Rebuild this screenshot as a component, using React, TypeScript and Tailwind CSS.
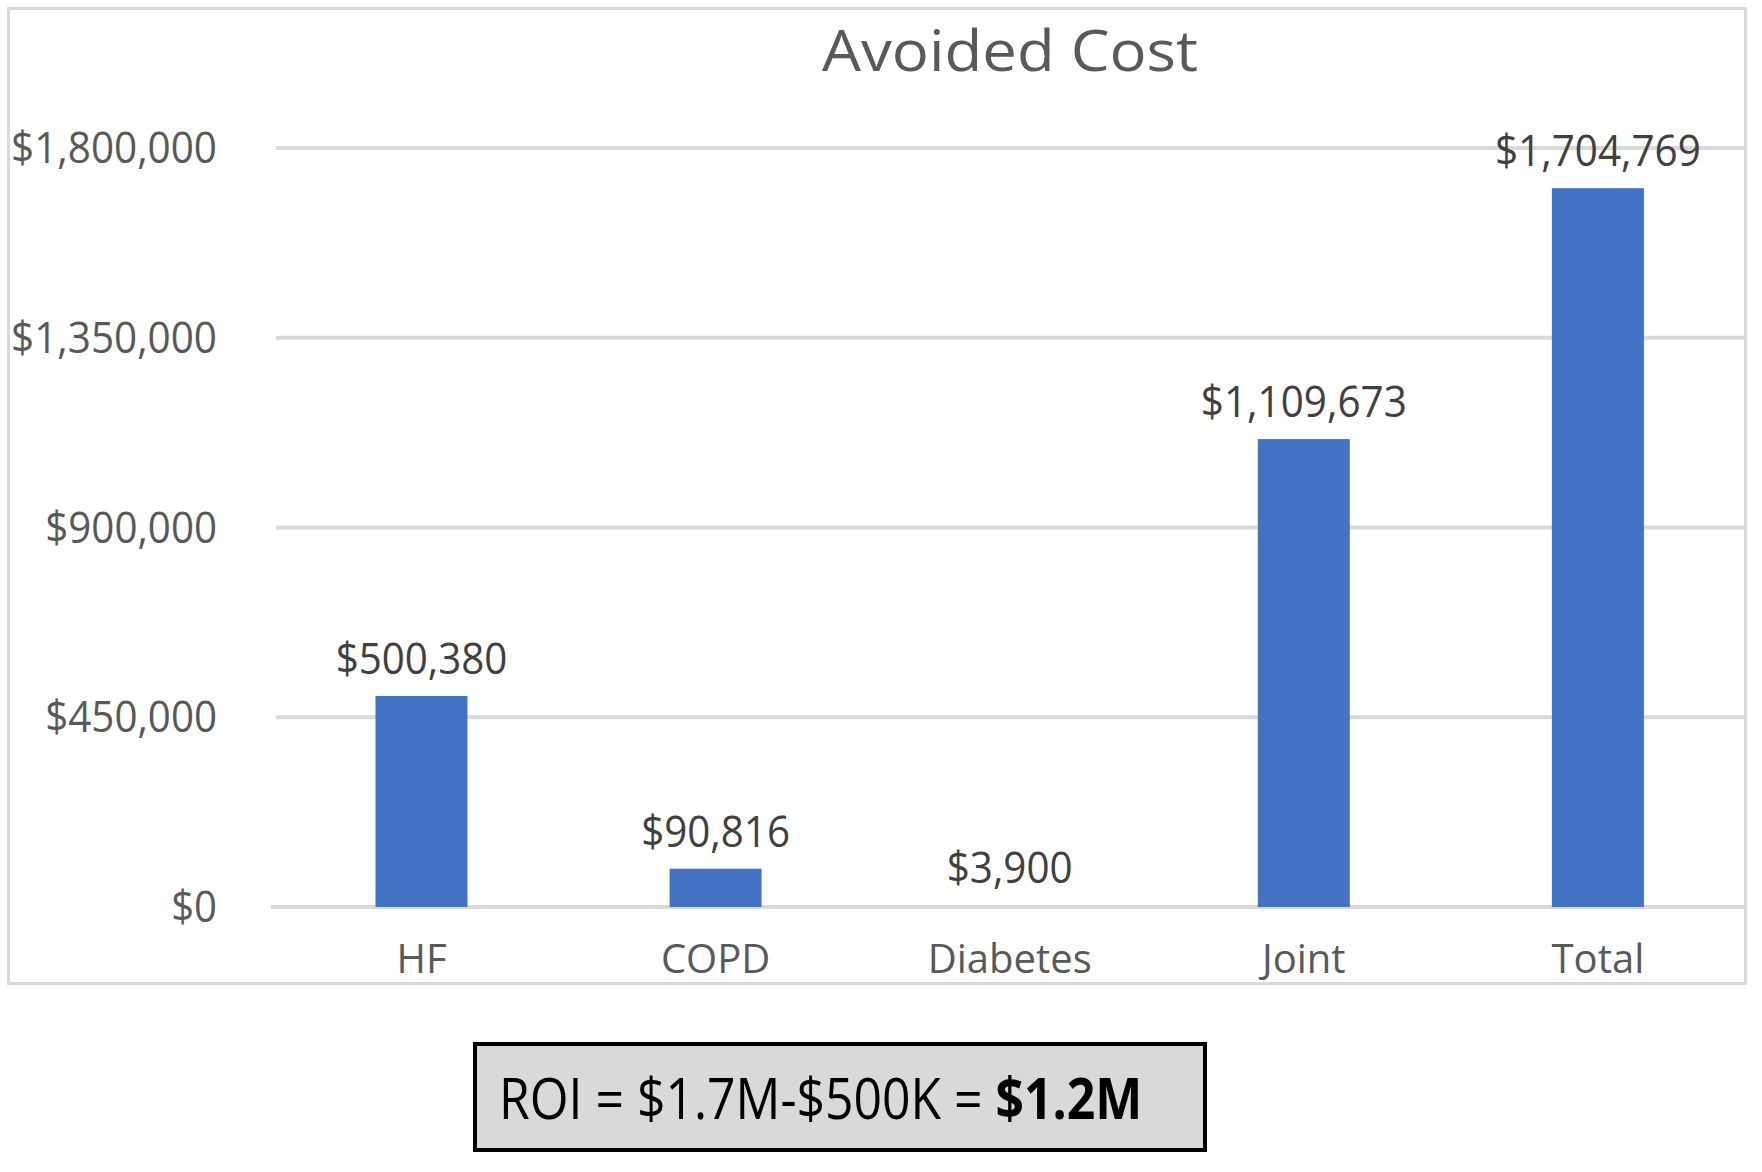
import React from "react";

const FONT = "'Open Sans', 'Noto Sans', sans-serif";
const FS = 44;
const calW = (s: string) =>
  s.split("").reduce((a, c) => a + (c === "," || c === "." ? 0.25 : 0.507), 0) * 45.2;

const zeroY = 907;
const topY = 148;
const cx0 = 421.5;
const cat = 294.1;
const max = 1800000;
const data = [
  { n: "HF", v: 500380, l: "$500,380" },
  { n: "COPD", v: 90816, l: "$90,816" },
  { n: "Diabetes", v: 3900, l: "$3,900" },
  { n: "Joint", v: 1109673, l: "$1,109,673" },
  { n: "Total", v: 1704769, l: "$1,704,769" },
];
const ticks = [
  { v: 1800000, l: "$1,800,000" },
  { v: 1350000, l: "$1,350,000" },
  { v: 900000, l: "$900,000" },
  { v: 450000, l: "$450,000" },
  { v: 0, l: "$0" },
];

export default function App() {
  return (
    <div className="w-[1762px] h-[1172px] bg-white relative overflow-hidden">
      <div className="ml-[7px] mt-[7px] w-[1740px] h-[978px] border-[3px] border-[#d9d9d9]">
        <svg width="1734" height="972" className="block overflow-visible">
          <g transform="translate(-10,-10)" fontFamily={FONT}>
            <text x={1010} y={71} fontSize={56} fill="#595959" textAnchor="middle" textLength={376} lengthAdjust="spacingAndGlyphs">
              Avoided Cost
            </text>
            {ticks.map((t) => {
              const y = zeroY - (t.v / max) * (zeroY - topY);
              const x0 = t.v === 0 ? 271 : 276;
              return (
                <g key={t.l}>
                  <rect x={x0} y={y - 2} width={1746 - x0} height={4} fill="#d9d9d9" />
                  <text x={217} y={y + 15} fontSize={FS} fill="#595959" textAnchor="end" textLength={calW(t.l)} lengthAdjust="spacingAndGlyphs">
                    {t.l}
                  </text>
                </g>
              );
            })}
            {data.map((d, i) => {
              const cx = cx0 + cat * i;
              const h = (d.v / max) * (zeroY - topY);
              const top = zeroY - h;
              return (
                <g key={d.n}>
                  {d.v > 10000 && <rect x={cx - 46} y={top} width={92} height={h} fill="#4472c4" />}
                  <text x={cx} y={top - 37 + 15} fontSize={FS} fill="#404040" textAnchor="middle" textLength={calW(d.l)} lengthAdjust="spacingAndGlyphs">
                    {d.l}
                  </text>
                  <text x={cx} y={958 + 15} fontSize={40} fill="#595959" textAnchor="middle">
                    {d.n}
                  </text>
                </g>
              );
            })}
          </g>
        </svg>
      </div>
      <div className="ml-[473px] mt-[57px] w-[734px] h-[110px] border-[4px] border-black bg-[#d9d9d9] flex items-center pl-[22px] overflow-hidden">
        <span className="text-[57px] text-black whitespace-nowrap origin-left scale-x-[0.875] leading-none" style={{ fontFamily: FONT }}>
          ROI = $1.7M-$500K = <b>$1.2M</b>
        </span>
      </div>
    </div>
  );
}
